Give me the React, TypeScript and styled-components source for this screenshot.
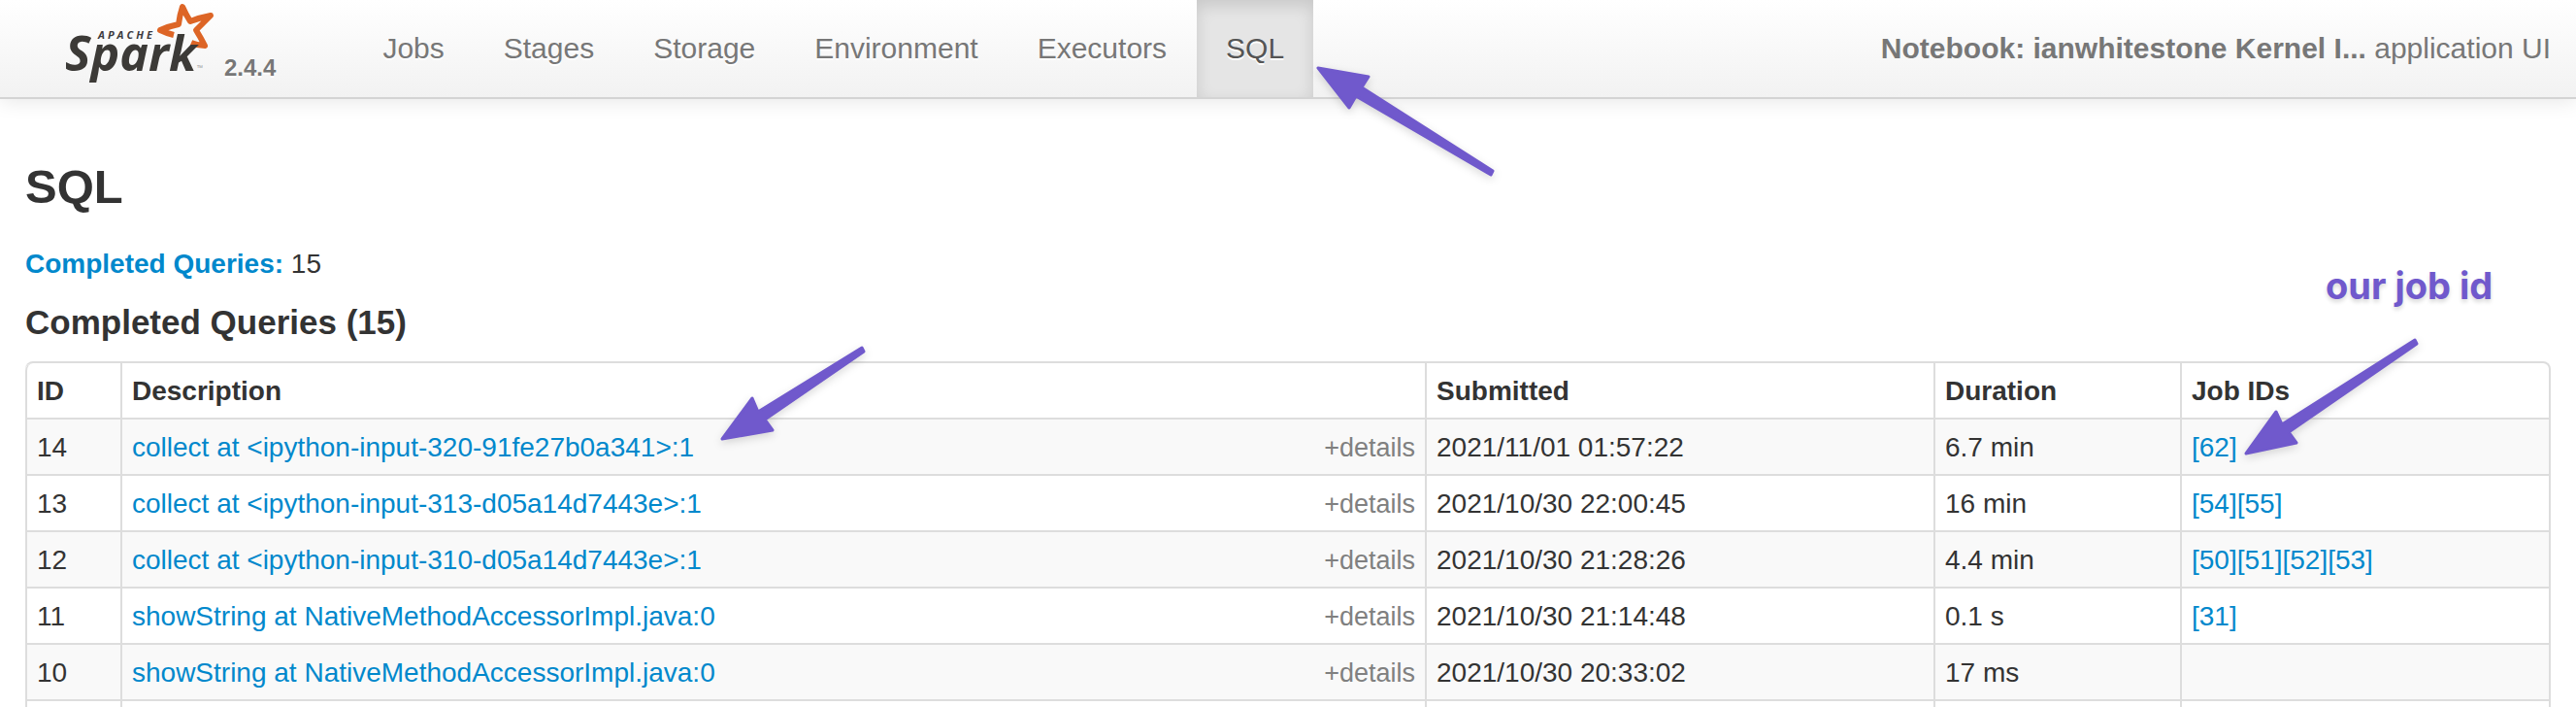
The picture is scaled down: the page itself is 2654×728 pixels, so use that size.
import React from "react";
import styled, { createGlobalStyle } from "styled-components";

const GlobalStyle = createGlobalStyle`
  *, *::before, *::after { box-sizing: border-box; }
  body {
    margin: 0;
    background: #fff;
    color: #333;
    font-family: "Helvetica Neue", "Liberation Sans", Helvetica, Arial, sans-serif;
    font-size: 28px;
    line-height: 40px;
  }
`;

const Page = styled.div`
  height: 100vh;
  overflow: hidden;
`;

const Navbar = styled.header`
  position: relative;
  display: flex;
  align-items: stretch;
  padding: 0 26px 0 66px;
  border-bottom: 2px solid #d4d4d4;
  background: linear-gradient(to bottom, #fff, #f2f2f2);
  box-shadow: 0 2px 20px rgba(0, 0, 0, 0.1);
  color: #777;
  font-size: 30px;
`;

const Brand = styled.a`
  display: flex;
  gap: 20px;
  margin-right: 80px;
  color: inherit;
  text-decoration: none;
  text-shadow: 0 2px 0 #fff;
`;

const Logo = styled.svg`
  display: block;
  width: 145px;
  height: 90px;
  text-shadow: none;
`;

const Version = styled.span`
  align-self: flex-end;
  padding-bottom: 10px;
  font-size: 24px;
  font-weight: bold;
`;

const NavList = styled.ul`
  display: flex;
  gap: 1px;
  margin: 0;
  padding: 0;
  list-style: none;
`;

const NavItem = styled.li`
  position: relative;
`;

const NavLink = styled.a<{ $active?: boolean }>`
  display: block;
  padding: 30px;
  color: ${(p) => (p.$active ? "#555" : "#777")};
  background: ${(p) => (p.$active ? "#e5e5e5" : "transparent")};
  box-shadow: ${(p) => (p.$active ? "inset 0 6px 16px rgba(0, 0, 0, 0.125)" : "none")};
  text-decoration: none;
  text-shadow: 0 2px 0 #fff;
`;

const AppName = styled.p`
  margin: 0 0 0 auto;
  padding: 30px 0;
  white-space: nowrap;
`;

const Content = styled.main`
  padding: 50px 26px 0;
`;

const Title = styled.h3`
  margin: 0 0 20px;
  font-size: 49px;
  line-height: 80px;
`;

const Summary = styled.ul`
  margin: 0 0 20px;
  padding: 0;
  list-style: none;
`;

const Subtitle = styled.h4`
  margin: 0 0 20px;
  font-size: 35px;
  line-height: 40px;
`;

const Link = styled.a`
  color: #0088cc;
  text-decoration: none;
`;

const QueryTable = styled.table`
  width: 100%;
  table-layout: fixed;
  border: 2px solid #ddd;
  border-left: 0;
  border-collapse: separate;
  border-spacing: 0;
  border-radius: 8px;
`;

const Col = styled.col<{ $width?: number }>`
  width: ${(p) => (p.$width ? `${p.$width}px` : "auto")};
`;

const HeadCell = styled.th`
  padding: 9px 10px 7px;
  border-left: 2px solid #ddd;
  text-align: left;
  &:first-child { border-top-left-radius: 8px; }
`;

const Row = styled.tr`
  &:nth-child(odd) > td { background: #f9f9f9; }
`;

const Cell = styled.td`
  position: relative;
  height: 58px;
  padding: 9px 10px 7px;
  border-top: 2px solid #ddd;
  border-left: 2px solid #ddd;
`;

const DescriptionLine = styled.div`
  display: flex;
  justify-content: space-between;
  align-items: baseline;
`;

const Details = styled.button`
  padding: 0;
  border: 0;
  background: none;
  color: grey;
  font: inherit;
  font-size: 27px;
  line-height: 40px;
  cursor: pointer;
`;

const Arrow = styled.svg<{ $left: number; $top: number }>`
  position: absolute;
  left: ${(p) => p.$left}px;
  top: ${(p) => p.$top}px;
  z-index: 2;
  overflow: visible;
  pointer-events: none;
  fill: #7059cc;
  stroke: #7059cc;
  stroke-width: 3;
  stroke-linejoin: round;
  filter: drop-shadow(0 3px 4px rgba(0, 0, 0, 0.15));
`;

const Note = styled.span`
  position: absolute;
  left: 148px;
  bottom: 170px;
  z-index: 2;
  color: #7059cc;
  font-family: Inter, sans-serif;
  font-size: 38px;
  font-weight: 700;
  line-height: 48px;
  white-space: nowrap;
  text-shadow: 0 3px 4px rgba(0, 0, 0, 0.15);
`;

const TABS = ["Jobs", "Stages", "Storage", "Environment", "Executors", "SQL"];

const QUERIES = [
  { id: 14, text: "collect at <ipython-input-320-91fe27b0a341>:1", at: "2021/11/01 01:57:22", took: "6.7 min", jobs: [62] },
  { id: 13, text: "collect at <ipython-input-313-d05a14d7443e>:1", at: "2021/10/30 22:00:45", took: "16 min", jobs: [54, 55] },
  { id: 12, text: "collect at <ipython-input-310-d05a14d7443e>:1", at: "2021/10/30 21:28:26", took: "4.4 min", jobs: [50, 51, 52, 53] },
  { id: 11, text: "showString at NativeMethodAccessorImpl.java:0", at: "2021/10/30 21:14:48", took: "0.1 s", jobs: [31] },
  { id: 10, text: "showString at NativeMethodAccessorImpl.java:0", at: "2021/10/30 20:33:02", took: "17 ms", jobs: [] as number[] },
];

function SparkLogo() {
  return (
    <Logo viewBox="66 0 145 90" overflow="visible" role="img" aria-label="Apache Spark">
      <path
        d="M179 36 Q171 34 165 31 Q174 27 184 25 Q185 16 188 7 Q191 14 196 22 Q206 18 217 16 Q209 24 202 31 Q207 39 211 47 Q204 47 197 44"
        fill="none"
        stroke="#dd6526"
        strokeWidth="6"
        strokeLinejoin="round"
      />
      <text x="101" y="40" fill="#3c3a3e" fontFamily="Open Sans" fontSize="11" fontWeight="700" fontStyle="italic" letterSpacing="3">
        APACHE
      </text>
      <text x="67" y="73" fill="#3c3a37" fontFamily="Open Sans" fontSize="50" fontWeight="700" fontStyle="italic">
        Spark
      </text>
      <text x="203" y="73" fill="#999" fontFamily="Open Sans" fontSize="8">
        ™
      </text>
    </Logo>
  );
}

export default function App() {
  return (
    <Page>
      <GlobalStyle />
      <Navbar>
        <Brand href="#">
          <SparkLogo />
          <Version>2.4.4</Version>
        </Brand>
        <nav>
          <NavList>
            {TABS.map((tab) => (
              <NavItem key={tab}>
                <NavLink href="#" $active={tab === "SQL"}>{tab}</NavLink>
                {tab === "SQL" && (
                  <Arrow $left={123} $top={68} width="184" height="114" aria-hidden="true">
                    <path d="M2 2 L54 11 L47 22 L182 108 L180 112 L41 31 L34 43 Z" />
                  </Arrow>
                )}
              </NavItem>
            ))}
          </NavList>
        </nav>
        <AppName>
          <strong>Notebook: ianwhitestone Kernel I...</strong> application UI
        </AppName>
      </Navbar>
      <Content>
        <Title>SQL</Title>
        <Summary>
          <li>
            <Link href="#completed"><strong>Completed Queries:</strong></Link> 15
          </li>
        </Summary>
        <Subtitle id="completed">Completed Queries (15)</Subtitle>
        <QueryTable>
          <colgroup>
            <Col $width={98} />
            <Col />
            <Col $width={524} />
            <Col $width={254} />
            <Col $width={380} />
          </colgroup>
          <thead>
            <tr>
              <HeadCell>ID</HeadCell>
              <HeadCell>Description</HeadCell>
              <HeadCell>Submitted</HeadCell>
              <HeadCell>Duration</HeadCell>
              <HeadCell>Job IDs</HeadCell>
            </tr>
          </thead>
          <tbody>
            {QUERIES.map((q, i) => (
              <Row key={q.id}>
                <Cell>{q.id}</Cell>
                <Cell>
                  <DescriptionLine>
                    <Link href="#">{q.text}</Link>
                    <Details type="button">+details</Details>
                  </DescriptionLine>
                  {i === 0 && (
                    <Arrow $left={616} $top={-76} width="152" height="98" aria-hidden="true">
                      <path d="M2 96 L33 54 L39 68 L146 2 L148 6 L46 76 L54 87 Z" />
                    </Arrow>
                  )}
                </Cell>
                <Cell>{q.at}</Cell>
                <Cell>{q.took}</Cell>
                <Cell>
                  {q.jobs.map((job) => (
                    <Link href="#" key={job}>[{job}]</Link>
                  ))}
                  {i === 0 && (
                    <>
                      <Note>our job id</Note>
                      <Arrow $left={64} $top={-84} width="182" height="122" aria-hidden="true">
                        <path d="M2 119 L33 76 L39 89 L176 2 L178 6 L46 97 L54 108 Z" />
                      </Arrow>
                    </>
                  )}
                </Cell>
              </Row>
            ))}
            <Row aria-hidden="true">
              <Cell />
              <Cell />
              <Cell />
              <Cell />
              <Cell />
            </Row>
          </tbody>
        </QueryTable>
      </Content>
    </Page>
  );
}
